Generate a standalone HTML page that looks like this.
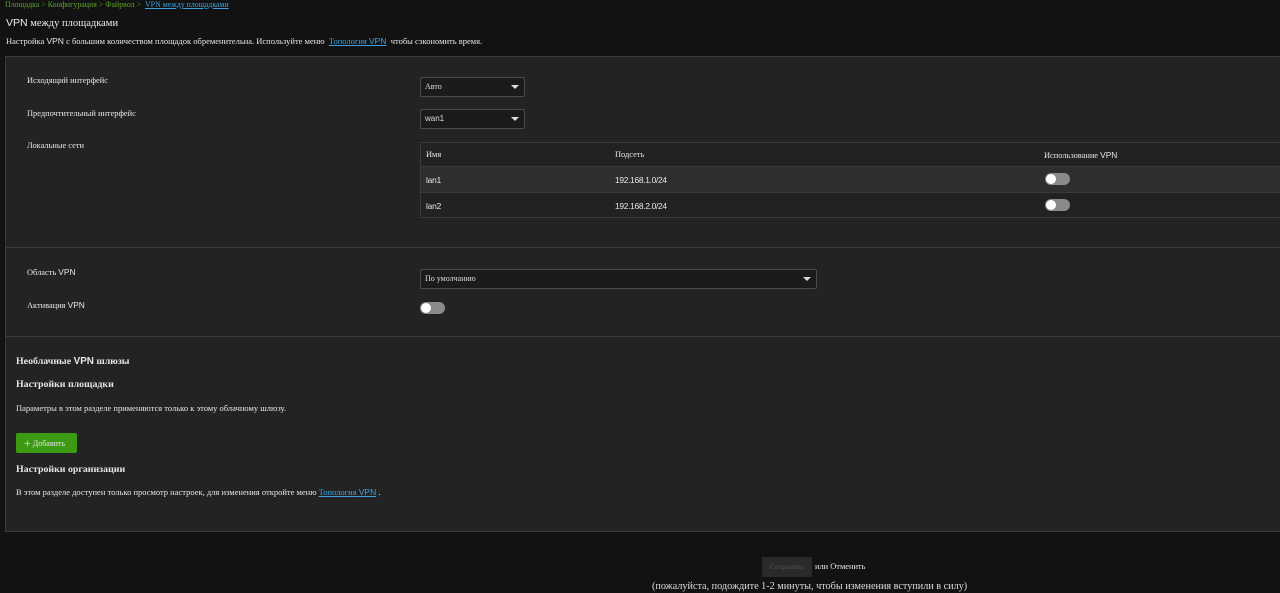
<!DOCTYPE html>
<html><head><meta charset="utf-8"><style>
*{margin:0;padding:0;box-sizing:border-box}
body{width:1280px;height:593px;overflow:hidden;background:#121212;color:#e6e6e6;font-family:"Liberation Serif","Noto Serif CJK SC",serif;font-size:8.4px;position:relative}
.a{position:absolute;white-space:nowrap}
.s{font-family:"Liberation Sans","Noto Sans CJK SC",sans-serif}
a{color:#3ea0e0;text-decoration:underline}
.panel{position:absolute;left:5px;top:56px;width:1280px;height:476px;background:#232323;border:1px solid #3a3a3a}
.hr{position:absolute;left:5px;width:1280px;height:1px;background:#3a3a3a}
.sel{position:absolute;height:20px;border:1px solid #4a4a4a;border-radius:2px;background:#1b1b1b;font-size:8px;padding-left:4px;line-height:18px;color:#ddd}
.sel:after{content:"";position:absolute;right:5px;top:7px;border-left:4px solid transparent;border-right:4px solid transparent;border-top:4px solid #ddd}
.tg{position:absolute;width:25px;height:12px;border-radius:6px;background:#8a8a8a}
.tg:before{content:"";position:absolute;left:1px;top:1px;width:10px;height:10px;border-radius:5px;background:#fff}
.tbl{position:absolute;left:420px;top:142px;width:870px;height:76px;border:1px solid #3a3a3a;background:#222}
.row{position:absolute;left:0;right:0;border-top:1px solid #3a3a3a}
</style></head><body>
<div class="a" style="left:5px;top:0px;color:#5aa02c;font-size:7.9px">Площадка &gt; Конфигурация &gt; Файрвол &gt; &nbsp;<a>VPN между площадками</a></div>
<div class="a" style="left:6px;top:17px;font-size:10.5px;color:#eee"><span class="s">VPN</span> между площадками</div>
<div class="a" style="left:6px;top:36px;font-size:8.5px">Настройка <span class="s">VPN</span> с большим количеством площадок обременительна. Используйте меню &nbsp;<a>Топология <span class="s">VPN</span></a>&nbsp; чтобы сэкономить время.</div>
<div class="panel"></div>
<div class="hr" style="top:247px"></div>
<div class="hr" style="top:336px"></div>
<div class="a" style="left:27px;top:76px">Исходящий интерфейс</div>
<div class="a" style="left:27px;top:109px">Предпочтительный интерфейс</div>
<div class="a" style="left:27px;top:141px">Локальные сети</div>
<div class="sel" style="left:420px;top:77px;width:105px">Авто</div>
<div class="sel s" style="left:420px;top:109px;width:105px">wan1</div>
<div class="tbl">
<div class="a" style="left:5px;top:7px">Имя</div>
<div class="a" style="left:194px;top:7px">Подсеть</div>
<div class="a" style="left:623px;top:7px">Использование <span class="s">VPN</span></div>
<div class="row" style="top:23px;height:26px;background:#2e2e2e"></div>
<div class="row" style="top:49px;height:26px"></div>
<div class="a s" style="left:5px;top:32px;letter-spacing:-0.2px">lan1</div>
<div class="a s" style="left:194px;top:32px;letter-spacing:-0.3px">192.168.1.0/24</div>
<div class="tg" style="left:624px;top:30px"></div>
<div class="a s" style="left:5px;top:58px;letter-spacing:-0.2px">lan2</div>
<div class="a s" style="left:194px;top:58px;letter-spacing:-0.3px">192.168.2.0/24</div>
<div class="tg" style="left:624px;top:56px"></div>
</div>
<div class="a" style="left:27px;top:267px">Область <span class="s">VPN</span></div>
<div class="a" style="left:27px;top:300px">Активация <span class="s">VPN</span></div>
<div class="sel" style="left:420px;top:269px;width:397px">По умолчанию</div>
<div class="tg" style="left:420px;top:302px"></div>
<div class="a" style="left:16px;top:356px;font-size:9.9px;font-weight:bold">Необлачные <span class="s">VPN</span> шлюзы</div>
<div class="a" style="left:16px;top:379px;font-size:9.9px;font-weight:bold">Настройки площадки</div>
<div class="a" style="left:16px;top:403px;font-size:8.5px">Параметры в этом разделе применяются только к этому облачному шлюзу.</div>
<div class="a" style="left:16px;top:433px;width:61px;height:20px;background:#3c9a13;border-radius:2px;font-size:8px;line-height:20px;padding-left:8px"><span style="font-size:12px;font-weight:normal;vertical-align:-1px">+</span> Добавить</div>
<div class="a" style="left:16px;top:464px;font-size:9.9px;font-weight:bold">Настройки организации</div>
<div class="a" style="left:16px;top:487px;font-size:8.5px">В этом разделе доступен только просмотр настроек, для изменения откройте меню <a>Топология <span class="s">VPN</span></a> .</div>
<div class="a" style="left:762px;top:557px;width:50px;height:20px;background:#2a2a2a;color:#555;font-size:7.5px;line-height:20px;text-align:center">Сохранить</div>
<div class="a" style="left:815px;top:562px;font-size:8.4px">или Отменить</div>
<div class="a" style="left:652px;top:581px;font-size:10.2px;color:#ddd">(пожалуйста, подождите 1-2 минуты, чтобы изменения вступили в силу)</div>
</body></html>
